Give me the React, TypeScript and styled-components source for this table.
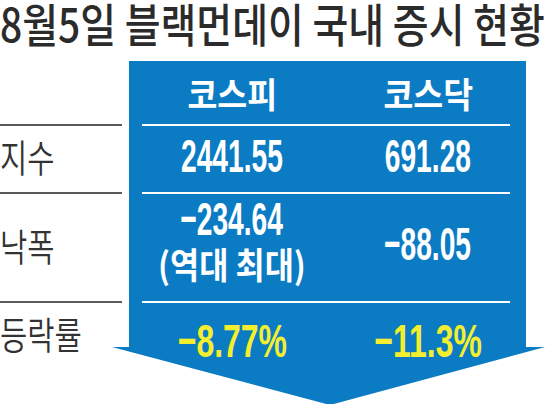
import styled, { createGlobalStyle } from "styled-components";

const GlobalStyle = createGlobalStyle`
  html, body {
    margin: 0;
    padding: 0;
    background: #ffffff;
    overflow: hidden;
  }
`;

const BLUE = "#0b7bc4";
const KR = `"Noto Sans CJK KR", "Noto Sans", sans-serif`;
const NUM = `"Liberation Sans", Arial, sans-serif`;

const Page = styled.div`
  width: 549px;
  height: 404px;
  overflow: hidden;
`;

const Title = styled.h1`
  margin: 0;
  width: max-content;
  height: 44px;
  font-family: ${KR};
  font-weight: 500;
  font-size: 46px;
  line-height: 44px;
  color: #2b2b2b;
  white-space: nowrap;
  transform: scaleX(0.846);
  transform-origin: left center;
`;

const Board = styled.div`
  display: flex;
  margin-top: 17px;
`;

const LabelColumn = styled.div`
  width: 122px;
  display: flex;
  flex-direction: column;
`;

const LabelCell = styled.div<{ $h: number; $line: boolean; $pad: number }>`
  height: ${({ $h }) => $h}px;
  box-sizing: border-box;
  border-top: ${({ $line }) => ($line ? "2px solid #5a5a5a" : "none")};
  display: flex;
  align-items: center;
  padding-bottom: ${({ $pad }) => Math.max(0, $pad)}px;
  padding-top: ${({ $pad }) => Math.max(0, -$pad)}px;
`;

const Label = styled.span`
  display: inline-block;
  font-family: ${KR};
  font-weight: 350;
  font-size: 38px;
  line-height: 1;
  color: #333333;
  white-space: nowrap;
  transform: scaleX(0.78);
  transform-origin: left center;
`;

const Panel = styled.div`
  width: 397px;
  margin-left: 7px;
  display: flex;
  flex-direction: column;
`;

const Row = styled.div<{ $h: number; $line: boolean; $pad: number }>`
  position: relative;
  height: ${({ $h }) => $h}px;
  box-sizing: border-box;
  background: ${BLUE};
  display: grid;
  grid-template-columns: 1fr 1fr;
  padding-left: 5px;
  align-items: center;
  justify-items: center;
  padding-bottom: ${({ $pad }) => Math.max(0, $pad)}px;
  padding-top: ${({ $pad }) => Math.max(0, -$pad)}px;

  &::before {
    content: "";
    display: ${({ $line }) => ($line ? "block" : "none")};
    position: absolute;
    top: 0;
    left: 13px;
    right: 16px;
    height: 2px;
    background: #ffffff;
  }
`;

const Stack = styled.div`
  display: flex;
  flex-direction: column;
  align-items: center;
  gap: 3px;
  margin-bottom: 11px;
`;

const Head = styled.span`
  display: inline-block;
  font-family: ${KR};
  font-weight: 700;
  font-size: 35px;
  line-height: 1;
  color: #ffffff;
  white-space: nowrap;
  transform: scaleX(0.93);
`;

const Note = styled.span`
  display: inline-block;
  font-family: ${KR};
  font-weight: 700;
  font-size: 36px;
  line-height: 1;
  color: #ffffff;
  white-space: nowrap;
  transform: scaleX(0.88);
`;

const Value = styled.span<{ $yellow?: boolean }>`
  display: inline-block;
  font-family: ${NUM};
  font-weight: 700;
  font-size: 47px;
  line-height: 1;
  color: ${({ $yellow }) => ($yellow ? "#f4ef2e" : "#ffffff")};
  white-space: nowrap;
  transform: scaleX(${({ $yellow }) => ($yellow ? 0.68 : 0.6)});
`;

const ArrowHead = styled.svg`
  display: block;
  width: 433px;
  height: 58px;
  margin-left: -17px;
`;

type Line = {
  label: string;
  h: number;
  pad: number;
  kospi: string;
  note?: string;
  kosdaq: string;
  yellow?: boolean;
};

const rows: Line[] = [
  { label: "지수", h: 68, pad: 6, kospi: "2441.55", kosdaq: "691.28" },
  { label: "낙폭", h: 109, pad: 6, kospi: "−234.64", note: "(역대 최대)", kosdaq: "−88.05" },
  { label: "등락률", h: 46, pad: -16, kospi: "−8.77%", kosdaq: "−11.3%", yellow: true },
];

export default function App() {
  return (
    <Page>
      <GlobalStyle />
      <Title>8월5일 블랙먼데이 국내 증시 현황</Title>
      <Board>
        <LabelColumn>
          <LabelCell $h={63} $line={false} $pad={0} />
          {rows.map((r) => (
            <LabelCell key={r.label} $h={r.h} $line={true} $pad={r.pad}>
              <Label>{r.label}</Label>
            </LabelCell>
          ))}
        </LabelColumn>
        <Panel>
          <Row $h={63} $line={false} $pad={0}>
            <Head>코스피</Head>
            <Head>코스닥</Head>
          </Row>
          {rows.map((r) => (
            <Row key={r.label} $h={r.h} $line={true} $pad={r.pad}>
              {r.note ? (
                <Stack>
                  <Value $yellow={r.yellow}>{r.kospi}</Value>
                  <Note>{r.note}</Note>
                </Stack>
              ) : (
                <Value $yellow={r.yellow}>{r.kospi}</Value>
              )}
              <Value $yellow={r.yellow}>{r.kosdaq}</Value>
            </Row>
          ))}
          <ArrowHead viewBox="0 0 433 58" preserveAspectRatio="none">
            <polygon points="0,0 433,0 218,58" fill={BLUE} />
          </ArrowHead>
        </Panel>
      </Board>
    </Page>
  );
}
